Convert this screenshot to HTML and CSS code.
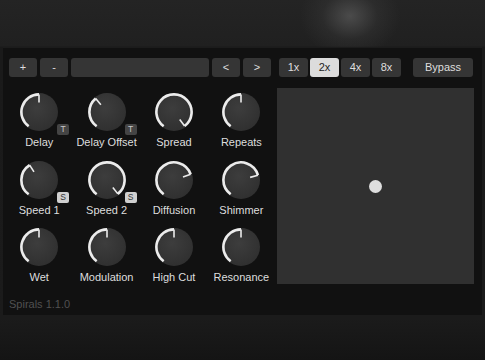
FILE: index.html
```html
<!DOCTYPE html>
<html lang="en">
<head>
    <meta charset="UTF-8">
    <meta name="viewport" content="width=device-width, initial-scale=1.0">
    <title>Spirals</title>
    <link rel="stylesheet" href="styles.css">
</head>
<body>
    <div class="plugin">
        <div class="toolbar">
            <div class="preset-bar">
                <button class="btn btn-small">+</button>
                <button class="btn btn-small">-</button>
                <div class="preset-name"></div>
                <button class="btn btn-small">&lt;</button>
                <button class="btn btn-small">&gt;</button>
            </div>
            <div class="oversampling">
                <button class="btn btn-os">1x</button>
                <button class="btn btn-os active">2x</button>
                <button class="btn btn-os">4x</button>
                <button class="btn btn-os">8x</button>
            </div>
            <button class="btn btn-bypass">Bypass</button>
        </div>

        <div class="main">
            <div class="knob-grid" id="knobGrid">
                <!-- knobs are rendered here -->
            </div>
            <div class="xy-pad">
                <div class="xy-dot"></div>
            </div>
        </div>

        <div class="version">Spirals 1.1.0</div>
    </div>

    <script>
        // angle in degrees, 0 = top, range -144..144
        const knobs = [
            { name: 'Delay', angle: 0, badge: 'T' },
            { name: 'Delay Offset', angle: -40, badge: 'T' },
            { name: 'Spread', angle: 143 },
            { name: 'Repeats', angle: 0 },
            { name: 'Speed 1', angle: -32, badge: 'S', badgeOn: true },
            { name: 'Speed 2', angle: 142, badge: 'S', badgeOn: true },
            { name: 'Diffusion', angle: 71 },
            { name: 'Shimmer', angle: 74 },
            { name: 'Wet', angle: 0 },
            { name: 'Modulation', angle: 0 },
            { name: 'High Cut', angle: 0 },
            { name: 'Resonance', angle: 0 }
        ];

        function point(angle, radius) {
            const t = angle * Math.PI / 180;
            return [(19 + radius * Math.sin(t)).toFixed(2), (19 - radius * Math.cos(t)).toFixed(2)];
        }

        function knobSvg(angle) {
            const r = 17.6;
            const start = -144;
            const [sx, sy] = point(start, r);
            const [ex, ey] = point(angle, r);
            const [px, py] = point(angle, 9.5);
            const large = angle - start > 180 ? 1 : 0;
            return `
                <svg class="knob-svg" viewBox="0 0 38 38" width="38" height="38">
                    <defs>
                        <radialGradient id="kg" cx="45%" cy="40%" r="60%">
                            <stop offset="0%" stop-color="#3d3d3d"/>
                            <stop offset="100%" stop-color="#303030"/>
                        </radialGradient>
                    </defs>
                    <circle cx="19" cy="19" r="19" fill="url(#kg)"/>
                    <path d="M${sx} ${sy} A${r} ${r} 0 ${large} 1 ${ex} ${ey}" fill="none" stroke="#ececec" stroke-width="2.6"/>
                    <line x1="${ex}" y1="${ey}" x2="${px}" y2="${py}" stroke="#ececec" stroke-width="1.6"/>
                </svg>`;
        }

        document.getElementById('knobGrid').innerHTML = knobs.map(k => `
            <div class="knob-cell">
                <div class="knob">
                    ${knobSvg(k.angle)}
                    ${k.badge ? `<span class="badge${k.badgeOn ? ' badge-on' : ''}">${k.badge}</span>` : ''}
                </div>
                <div class="knob-label">${k.name}</div>
            </div>
        `).join('');
    </script>
</body>
</html>
```

FILE: styles.css
```css
:root {
    --panel: #111111;
    --control: #353535;
    --text: #dedede;
}

body {
    margin: 0;
    height: 360px;
    overflow: hidden;
    font-family: "Liberation Sans", Arial, sans-serif;
    background:
        radial-gradient(ellipse 50px 42px at 350px 16px, rgba(85, 85, 85, 0.8) 0, rgba(60, 60, 60, 0.35) 55%, rgba(40, 40, 40, 0) 100%),
        linear-gradient(#242424 0, #202020 46px, #1a1a1a 47px, #1b1b1b 318px, #141414 360px);
}

.plugin {
    margin: 47px 3px 0;
    height: 268px;
    box-sizing: border-box;
    padding: 10px 0 0 6px;
    background-color: var(--panel);
    border-top: 1px solid #1c1c1c;
}

.toolbar {
    display: flex;
    align-items: center;
    height: 19px;
}

.preset-bar {
    display: flex;
    gap: 3px;
}

.oversampling {
    display: flex;
    gap: 2px;
    margin-left: 8px;
}

.btn {
    height: 19px;
    padding: 0;
    border: none;
    border-radius: 3px;
    background-color: var(--control);
    color: var(--text);
    font-family: inherit;
    font-size: 11px;
    line-height: 19px;
    cursor: pointer;
}

.btn-small {
    width: 28px;
}

.btn-os {
    width: 29px;
}

.btn.active {
    background-color: #dcdcdc;
    color: #1e1e1e;
}

.btn-bypass {
    width: 60px;
    margin-left: 12px;
}

.preset-name {
    width: 138px;
    height: 19px;
    border-radius: 3px;
    background-color: var(--control);
}

.main {
    display: flex;
    margin: 11px 0 0 -3.5px;
}

.knob-grid {
    display: grid;
    grid-template-columns: repeat(4, 67.4px);
    grid-auto-rows: 67.5px;
    width: 269.6px;
}

.knob-cell {
    display: flex;
    flex-direction: column;
    align-items: center;
    padding-top: 5px;
}

.knob {
    position: relative;
    width: 38px;
    height: 38px;
}

.knob-svg {
    display: block;
}

.badge {
    position: absolute;
    left: 37px;
    top: 31px;
    width: 12px;
    height: 11px;
    border-radius: 2px;
    background-color: #444;
    color: #c8c8c8;
    font-size: 8.5px;
    line-height: 11px;
    text-align: center;
}

.badge-on {
    background-color: #d0d0d0;
    color: #333;
}

.knob-label {
    margin-top: 5px;
    color: var(--text);
    font-size: 11px;
    line-height: 13px;
    white-space: nowrap;
}

.xy-pad {
    display: flex;
    align-items: center;
    justify-content: center;
    width: 197px;
    height: 196px;
    margin-left: 2px;
    background-color: #303030;
}

.xy-dot {
    width: 13px;
    height: 13px;
    border-radius: 50%;
    background-color: #dedede;
}

.version {
    margin-top: 7px;
    color: #505050;
    font-size: 11px;
    line-height: 13px;
}
```
